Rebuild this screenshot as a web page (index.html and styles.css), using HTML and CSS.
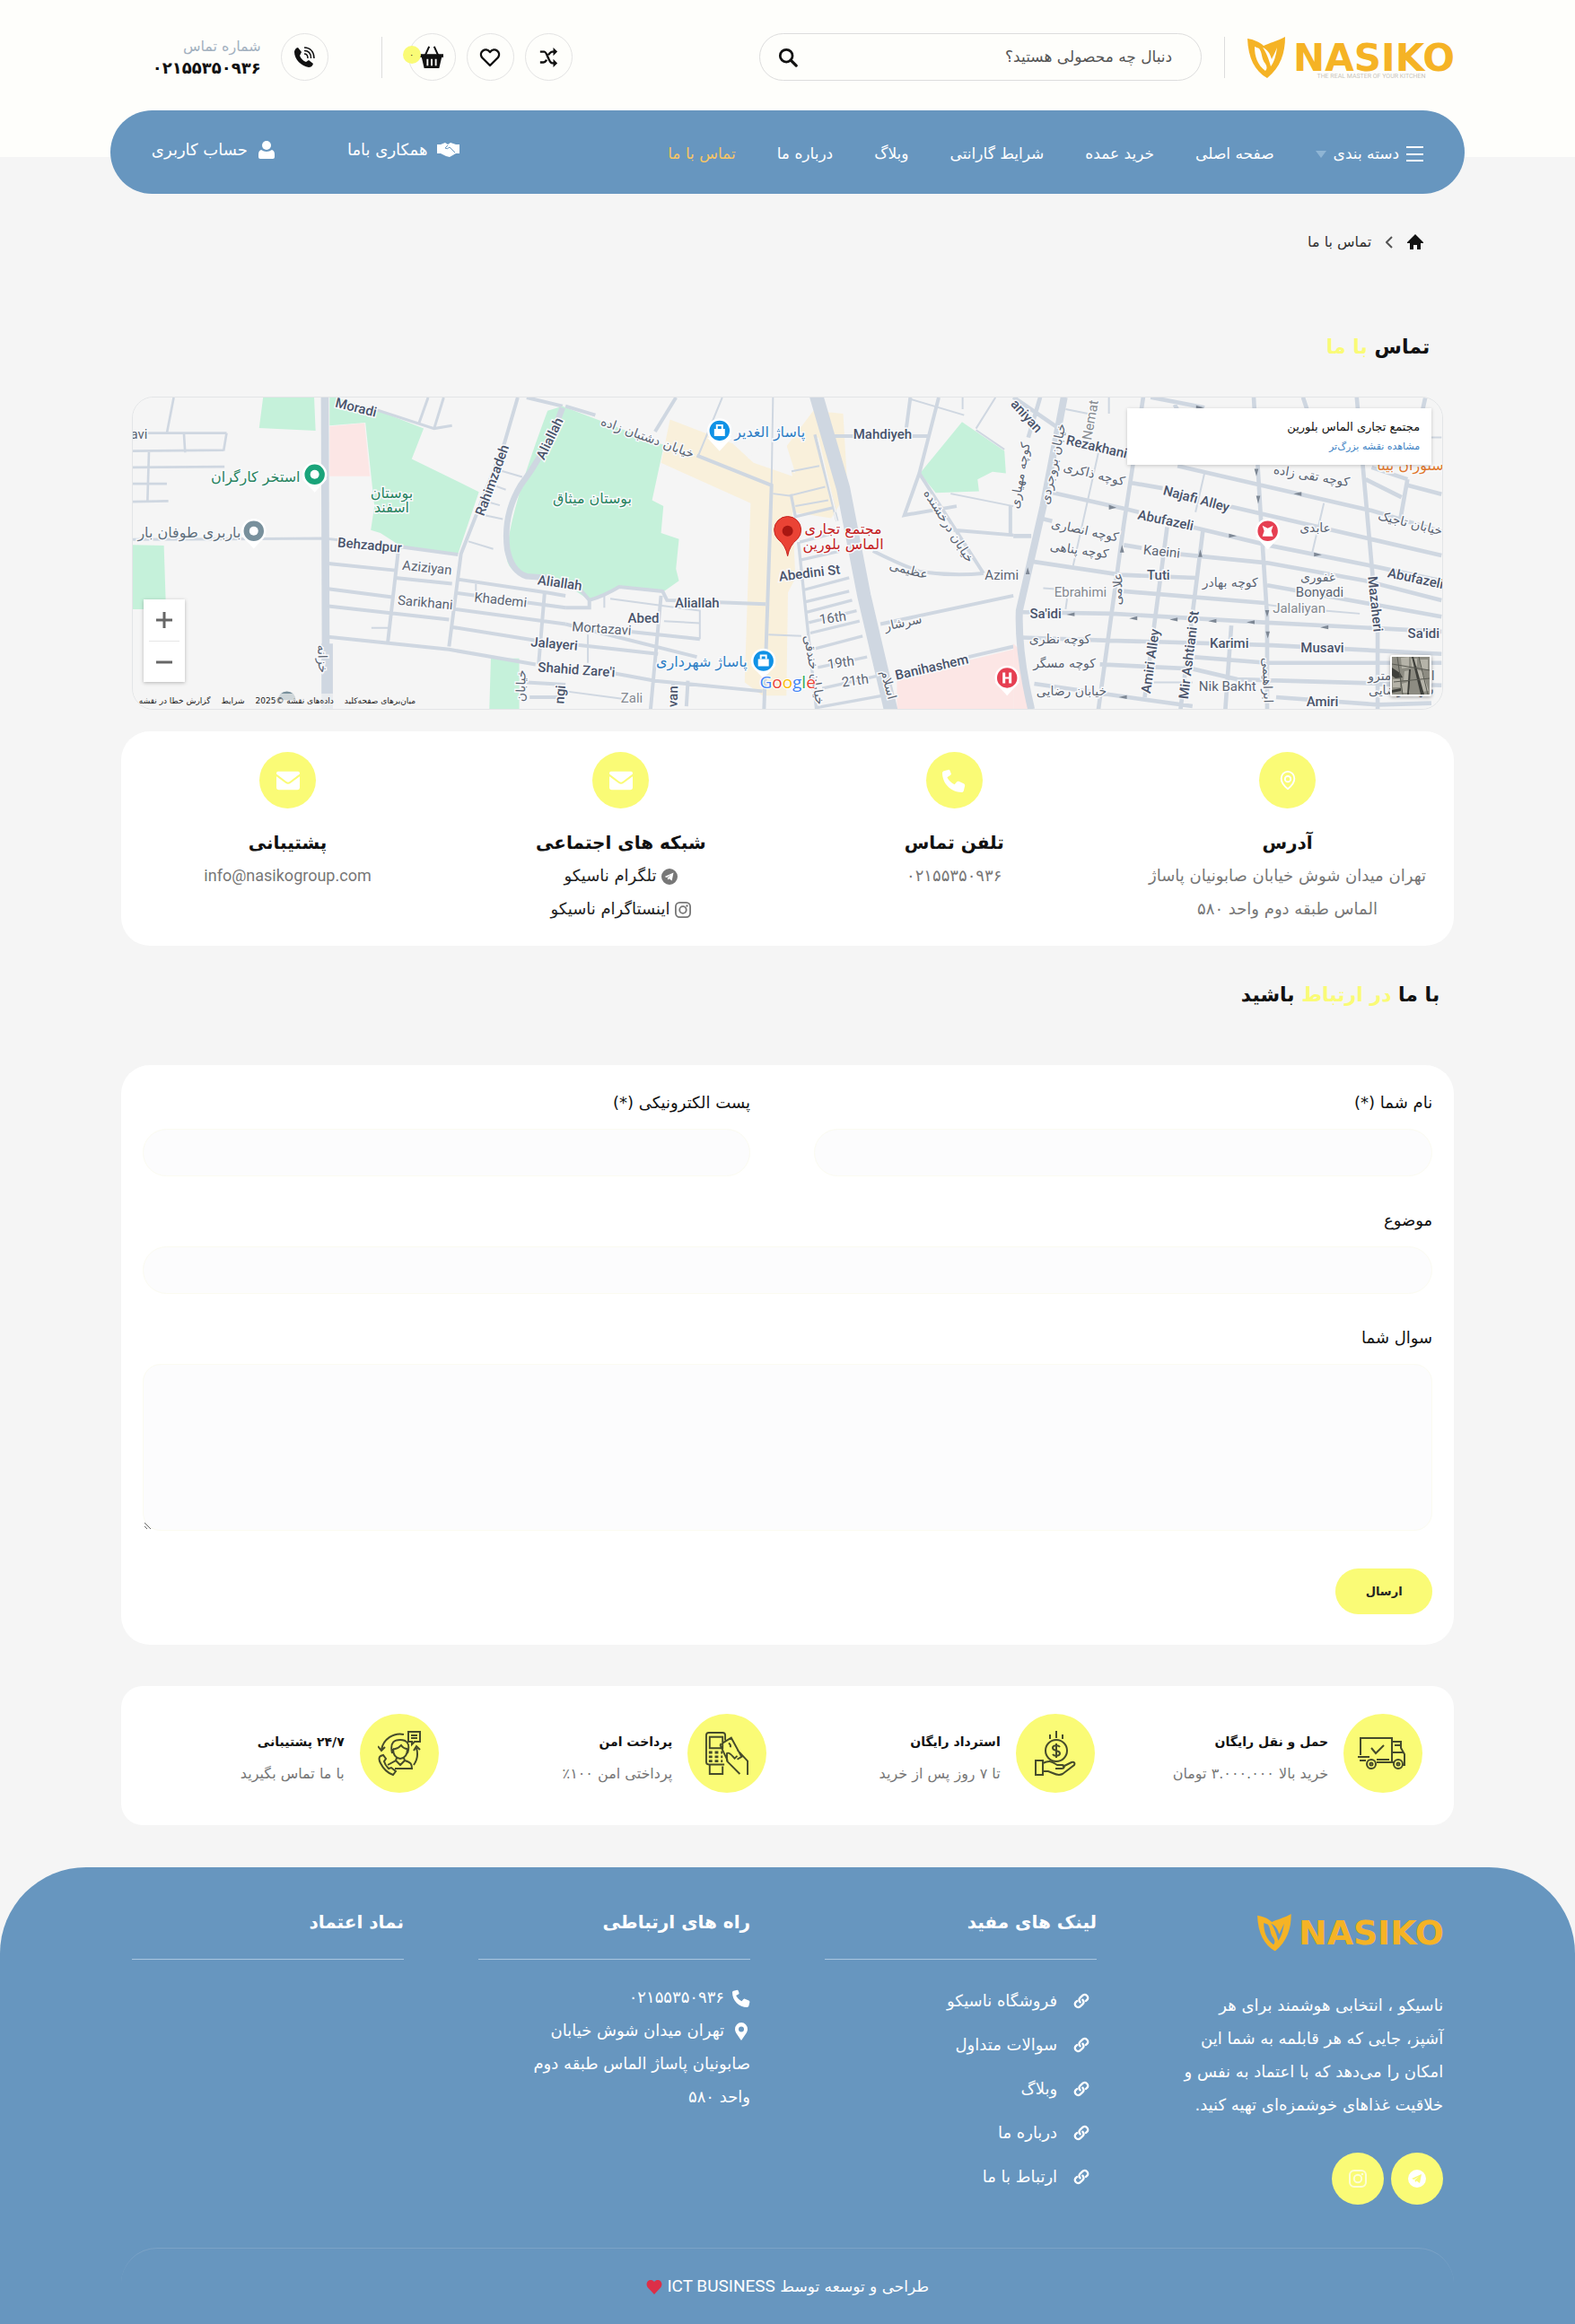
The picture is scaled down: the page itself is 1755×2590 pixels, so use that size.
FILE: index.html
```html
<!DOCTYPE html>
<html lang="fa" dir="rtl">
<head>
<meta charset="utf-8">
<meta name="viewport" content="width=device-width, initial-scale=1">
<title>تماس با ما</title>
<link rel="stylesheet" href="styles.css">
</head>
<body>
<svg class="sprite" aria-hidden="true">
  <symbol id="leaf" viewBox="0 0 42 46"><path fill-rule="evenodd" d="M0 2C7 3 14 6 18 10C24 7 33 5 42 0C42 18 37 34 22 46C8 38 1 24 0 2ZM8 11C8 22 11 31 20 38C22 36 22 33 20 30C15 24 17 18 13 13ZM17 12C21 17 24 26 26 33C30 28 32 20 33 12C30 19 29 21 27 25C25 18 22 14 17 12Z"/></symbol>
  <symbol id="search" viewBox="0 0 24 24"><circle cx="10" cy="10" r="7.5" fill="none" stroke="currentColor" stroke-width="3"/><path d="M15.500 15.500L22 22" stroke="currentColor" stroke-width="3.500" stroke-linecap="round"/></symbol>
  <symbol id="shuffle" viewBox="0 0 24 24"><path fill="none" stroke="currentColor" stroke-width="2.600" d="M2 5H7C11 5 12 19 17 19H20M2 18H6C8 18 9 16.500 10 15M12 9C13.500 7 15 5 17 5H20"/><path d="M18 0L23 5L18 10ZM18 14L23 19L18 24Z"/></symbol>
  <symbol id="heart-line" viewBox="0 0 24 24"><path fill="none" stroke="currentColor" stroke-width="2.400" stroke-linejoin="round" d="M12 21L3 12C-1 6 7 0 12 6C17 0 25 6 21 12Z"/></symbol>
  <symbol id="basket" viewBox="0 0 28 28"><path fill="none" stroke="currentColor" stroke-width="2.200" d="M6 12L11 1M22 12L17 1"/><path fill-rule="evenodd" d="M0 10H28V14H26L23 27H5L2 14H0ZM8 16V24H10V16ZM13 16V24H15V16ZM18 16V24H20V16Z"/></symbol>
  <symbol id="phone" viewBox="0 0 24 24"><path d="M6.600 0.800L1.700 2C0.600 2.300 0 3.200 0 4.200C0 15 9 24 19.800 24C20.800 24 21.700 23.400 22 22.300L23.200 17.400C23.400 16.300 22.900 15.400 22 15L17 12.800C16.100 12.500 15.200 12.700 14.600 13.500L12.600 16C9 14.300 6.500 11.500 5 8.500L8.200 6.500C9 6 9.300 5.300 8.900 4.400L7.900 1.900C7.600 1.100 7.200 0.700 6.600 0.800Z"/></symbol>
  <symbol id="phone-wave" viewBox="0 0 24 24"><path d="M5 1L9 6L7 10C8 13 11 16 14 17L17 15L22 19C21 22 19 23 17 23C9 22 1 14 1 6C1 4 3 1 5 1Z"/><path fill="none" stroke="currentColor" stroke-width="1.500" d="M12 1C19 1 23 6 23 13M12 4.500C17 4.500 19.500 8 19.500 13M12 8C15 8 16 10 16 13"/></symbol>
  <symbol id="home" viewBox="0 0 18 18"><path d="M9 0L18 9V10H15V17H11V12H7V17H3V10H0V9Z"/></symbol>
  <symbol id="user" viewBox="0 0 18 20"><circle cx="9" cy="5" r="5"/><path d="M3 10Q9 14 15 10Q18 11 18 15V18Q18 20 16 20H2Q0 20 0 18V15Q0 11 3 10Z"/></symbol>
  <symbol id="hands" viewBox="0 0 25 16"><path d="M0 2H4L9 0L12 2L15 0L21 2H25V12H21L14 16L10 15L4 12H0Z"/><path d="M12 3L9 6Q11 8 14 5L20 11" fill="none" stroke="#6796bf" stroke-width="1"/></symbol>
  <symbol id="mail" viewBox="0 0 28 22"><path d="M2 0H26Q28 0 28 2V3L16 12Q14 13.500 12 12L0 3V2Q0 0 2 0ZM0 6L11 14Q14 16 17 14L28 6V19Q28 22 25 22H3Q0 22 0 19Z"/></symbol>
  <symbol id="pin-line" viewBox="0 0 20 24"><path fill="none" stroke="currentColor" stroke-width="2" d="M10 22C5 18 2 14 2 9.500A8 8.500 0 0 1 18 9.500C18 14 15 18 10 22Z"/><circle cx="10" cy="10" r="3.500" fill="none" stroke="currentColor" stroke-width="2"/></symbol>
  <symbol id="pin" viewBox="0 0 20 20"><path fill-rule="evenodd" d="M10 20C6 14 3 11 3 7.500A7 7.500 0 0 1 17 7.500C17 11 14 14 10 20ZM10 4.500A3 3 0 1 0 10 10.500A3 3 0 1 0 10 4.500Z"/></symbol>
  <symbol id="telegram" viewBox="0 0 20 20"><path fill-rule="evenodd" d="M10 0A10 10 0 1 0 10 20A10 10 0 1 0 10 0ZM15 5L13 15L9.500 12.500L8 14L7.500 11.500L12 7.500L6.500 11L4 10Z"/></symbol>
  <symbol id="instagram" viewBox="0 0 20 20"><g fill="none" stroke="currentColor" stroke-width="2"><rect x="1" y="1" width="18" height="18" rx="5"/><circle cx="10" cy="10" r="4.200"/></g><circle cx="15" cy="5" r="1.300"/></symbol>
  <symbol id="chain" viewBox="0 0 20 20"><g fill="none" stroke="currentColor" stroke-width="2.600" stroke-linecap="round"><path d="M8.500 11.500A4 4 0 0 1 8.500 6L12 2.700A4 4 0 0 1 17.500 8L15.500 10"/><path d="M11.500 8.500A4 4 0 0 1 11.500 14L8 17.300A4 4 0 0 1 2.500 12L4.500 10"/></g></symbol>
  <symbol id="heart" viewBox="0 0 18 18"><path d="M9 17L1.500 9C-2 3 5-2 9 3C13-2 20 3 16.500 9Z"/></symbol>
  <symbol id="truck" viewBox="0 0 56 36"><g fill="none" stroke="currentColor" stroke-width="2"><path d="M3 20V1H38V27M3 26H9M21 28H41M38 5H48V12L52 19V31H50M38 17H51M41 9H48M0 22H13M2 26H9M21 25H35"/><path d="M15 12L20 18L29 9"/><circle cx="15" cy="30" r="5"/><circle cx="45" cy="30" r="5"/><circle cx="15" cy="30" r="1.500"/><circle cx="45" cy="30" r="1.500"/></g></symbol>
  <symbol id="refund" viewBox="0 0 46 50"><g fill="none" stroke="currentColor" stroke-width="2"><path d="M24 0V8M17 4V9M31 4V9M1 33H9V49H1ZM9 36C18 32 20 35 25 38H31C34 39 33 42 30 42H23M31 40L41 35C44 34 45 36 44 38L31 48C27 50 24 49 20 47L15 45H9"/><circle cx="24" cy="22" r="12"/><path d="M28 18C26 15 20 16 20 19C20 23 28 21 28 25C28 28 22 29 20 26M24 14V30"/></g></symbol>
  <symbol id="payment" viewBox="0 0 50 50"><g fill="none" stroke="currentColor" stroke-width="2"><path d="M22 38H4Q1 38 1 35V4Q1 1 4 1H20Q23 1 23 4V10M5 6H20V19H5ZM5 38V49H20V40M17 15L30 7L42 29L37 32M17 15L26 34M49 50V34L37 21M25 34L40 49M25 34V25C28 23 31 28 34 31L37 28M27 13Q30 15 29 18"/><path stroke-width="3" stroke-dasharray="4 3" d="M4 24H20M4 29H20M4 34H20"/></g></symbol>
  <symbol id="support" viewBox="0 0 48 50"><g fill="none" stroke="currentColor" stroke-width="2"><path d="M34 1H47V12H41L38 15V12H34ZM37 5H44M37 8H44M29 4A21 21 0 0 0 4 21M0 17L4 22L8 18M43 19A22 22 0 0 1 40 38M40 22L43 17L47 21M16 25C13 12 19 10 25 10S37 13 33 25M17 20C22 21 25 17 26 16C28 19 30 20 33 20M17 20Q17 30 25 31Q33 30 33 20M21 30L20 33L11 38M29 30L30 33C37 35 38 37 38 42H19M20 33L25 38L30 33M3 28Q0 30 3 36Q8 46 17 49L20 45L15 41L12 42Q8 38 7 34L9 31L6 27Z"/></g></symbol>
</svg>

<header class="site-header">
  <div class="wrap">
    <div class="topbar">
      <a class="logo" href="#" aria-label="NASIKO">
        <svg viewBox="0 0 230 46"><use href="#leaf" x="0" y="0" width="42" height="46"/><text class="logo-name" x="231" y="38" text-anchor="end">NASIKO</text><text class="logo-tag" x="138" y="46" text-anchor="middle">THE REAL MASTER OF YOUR KITCHEN</text></svg>
      </a>
      <span class="divider"></span>
      <form class="search">
        <input type="search" aria-label="جستجو" placeholder="دنبال چه محصولی هستید؟">
        <button type="button" aria-label="جستجو"><svg class="i22"><use href="#search"/></svg></button>
      </form>
      <div class="tools">
        <a class="round" href="#" aria-label="مقایسه"><svg class="i22"><use href="#shuffle"/></svg></a>
        <a class="round" href="#" aria-label="علاقه‌مندی"><svg class="i24"><use href="#heart-line"/></svg></a>
        <a class="round" href="#" aria-label="سبد خرید"><svg class="i26"><use href="#basket"/></svg><span class="count">۰</span></a>
      </div>
      <span class="divider"></span>
      <div class="call">
        <a class="round" href="#" aria-label="تماس"><svg class="i24"><use href="#phone-wave"/></svg></a>
        <div class="call-text"><span>شماره تماس</span><strong>۰۲۱۵۵۳۵۰۹۳۶</strong></div>
      </div>
    </div>
    <nav class="navbar">
      <ul class="menu">
        <li><a class="cats" href="#"><span class="burger"></span>دسته بندی<span class="caret"></span></a></li>
        <li><a href="#">صفحه اصلی</a></li>
        <li><a href="#">خرید عمده</a></li>
        <li><a href="#">شرایط گارانتی</a></li>
        <li><a href="#">وبلاگ</a></li>
        <li><a href="#">درباره ما</a></li>
        <li><a class="active" href="#">تماس با ما</a></li>
      </ul>
      <div class="account">
        <a href="#"><svg class="hands"><use href="#hands"/></svg>همکاری باما</a>
        <a href="#"><svg class="i20"><use href="#user"/></svg>حساب کاربری</a>
      </div>
    </nav>
  </div>
</header>

<main class="wrap">
  <nav class="crumbs" aria-label="مسیر">
    <a href="#" aria-label="خانه"><svg class="i18"><use href="#home"/></svg></a>
    <svg class="chev" viewBox="0 0 8 14"><path d="M7 1L1 7L7 13" fill="none" stroke="#555" stroke-width="2"/></svg>
    <span>تماس با ما</span>
  </nav>

  <h1 class="title">تماس <em>با ما</em></h1>

  <section class="map">
    <svg class="map-art" viewBox="0 0 1462 348" direction="ltr">
      <rect width="1462" height="348" fill="#f5f5f5"/>
      <g transform="translate(-17 -12) scale(.333333)" fill="none" stroke="#cfd7e1" stroke-width="12">
        <g stroke="none" fill="#c5f1da"><path d="M488 30H658L663 147L474 138ZM710 30L860 75L1025 140L985 242L1210 352L1140 560L950 535L880 490L848 480L860 400L830 120L710 130ZM50 530L155 532L162 745H50ZM1250 910H1345V1080H1245Z"/><path fill="#fce6e5" d="M710 132L827 122L845 300H710Z"/></g>
        <path d="M188 36L165 155M50 155H365M222 155L226 220M365 155L355 215M50 215L355 212M105 215L100 385M50 270L358 268M50 325H165M50 385L170 383" stroke-width="8"/>
        <path d="M50 512L690 508L760 515M860 75L1060 140L1120 130M1010 120L1040 36M1060 140L1092 36" stroke-width="9"/>
        <path stroke-width="26" d="M694 36L697 850V1080"/><path stroke-width="38" d="M702 860V1080"/>
        <path d="M1340 36L1295 190L1150 560L1110 870M940 535L1140 562M940 550L905 855M705 592L930 615M930 640L1120 660M705 677L920 705M705 735L1110 780M705 838L1110 880L1400 930M1140 645L1440 690L1500 700M1130 690L1500 740M1130 745L1500 795M1120 805L1400 850M1430 690L1410 930M1370 36L1490 65M1370 990L1500 998M1380 1040H1500"/>
        <path stroke-width="6" d="M1280 280L1355 302M1260 330L1300 345M1220 380L1280 397M1205 425L1290 443M1175 518L1258 543M850 808H905M1200 660V690"/>
      </g>
      <g transform="translate(483 -12) scale(.333333)" fill="none" stroke="#cfd7e1" stroke-width="12">
        <g stroke="none"><path fill="#f9f0db" d="M350 110L560 190L630 255L760 300L740 200L830 80L930 90L945 350L890 440L760 420L770 640L745 690L740 1035H660L600 990L620 390L320 255Z"/><path fill="#f5f5f5" d="M650 205L690 180L740 195L770 290L700 260L610 240Z"/><path fill="#c5f1da" d="M-10 65L330 195L290 380L328 400L320 490L380 510L370 610L380 650L330 685L180 670L80 715L-30 640L-140 635Q-210 610-195 540Q-180 400-60 80ZM1328 118L1470 215L1475 290L1430 285L1380 310L1385 350L1240 355L1187 290Z"/><path fill="#fce6e5" d="M1110 975L1500 880V1080H1110Z"/></g>
        <path stroke-width="20" d="M-10 70Q-60 210-150 330Q-210 430-195 545Q-180 620-130 635L-60 640"/>
        <path d="M0 65L100 95M370 36L300 150M440 230L690 330L665 1080M1155 36L1140 150M1250 36L1185 290L1135 430L1310 400M895 165H1215M1185 290L1400 625M1030 550Q1130 600 1190 620Q1300 635 1400 625M1300 480L1500 497M1490 400V500M1055 795L1500 700M1350 905L1500 870M50 680L80 715Q130 700 180 670L325 685L340 715L670 728M80 715V740L0 740M320 700L285 1080M0 795L440 905M210 820L450 845M40 865L310 895M165 960L300 985L660 1020M360 985V1010M410 985L405 1070"/>
        <path stroke-width="6" d="M525 36L445 230M695 36L690 330M75 830V925M130 700V740M150 710L450 750V845M330 785L450 792M680 830L790 835M757 283L850 265M695 358L750 365L870 335M770 400L880 380M0 1020L190 1045M1150 40L1335 95M1440 36L1375 140M1330 36V75M1470 210L1375 145M1290 358L1500 400"/>
        <path d="M835 160L910 450M755 360L770 435L895 405M780 520L840 1080M785 520L900 490M790 580L920 550M800 680L950 640M805 720L950 685M810 755L960 715M815 790L975 750M820 825L985 785M825 880L995 835M860 1010L1040 970M845 940L1010 905M840 1075L1060 1035" stroke-width="10"/>
        <path stroke-width="46" d="M840 30L930 340L1000 700L1090 1085"/>
        <path stroke="#f5f5f5" stroke-width="4" d="M900 420L925 510M845 170L905 420"/>
      </g>
      <g transform="translate(983 -92) scale(.333333)" fill="none" stroke="#cfd7e1" stroke-width="14">
        <path fill="#fce6e5" stroke="none" d="M0 1100L20 1120L65 1320H0Z"/>
        <path stroke-width="24" d="M170 275L100 640L20 990Q15 1130 60 1320"/>
        <path d="M90 275L50 410M0 275L175 395M435 275L370 700L285 1320M460 275L640 310M640 480L540 300M805 275L830 700L850 1010V1320M970 275L985 320M1150 275L1220 1060V1320M1380 275L1370 320M385 560L500 580M550 505L1200 655L1434 725M720 640L1434 805M110 590L380 650L420 660M600 710L850 770L1200 840L1434 890M90 680L130 690M60 740H0M60 825L360 870L610 880M370 770L430 780M550 800L850 830L1180 890L1434 955M370 925L850 965M850 905L1434 1010M30 995L330 1000L850 1030L1434 1060M30 1080L320 1090L850 1105L1434 1135M290 1170L600 1185L750 1220L1434 1240M600 1145L850 1165H1434M70 1235L420 1285L600 1310M880 1280L1220 1305L1400 1300M515 710L440 1280M635 720L560 1320M730 1040L710 1320M1320 550L1295 690M1180 550L1300 610M1320 570L1434 600M1200 510L1320 550"/>
        <path stroke-width="6" d="M320 275V330M175 315L250 330M285 460L200 840M640 530L610 660M1040 630L1000 800M100 915L145 918M180 950L175 985M850 970L885 975M1040 990L1160 1000M470 1230H600M1390 410H1434"/>
        <path fill="#7d8794" stroke="none" d="M320 635L345 645L320 652ZM612 302L638 310L612 316ZM722 732L748 740L722 746ZM1007 795L1033 803L1007 809ZM965 592L938 598L965 606ZM205 996L178 1003L205 1009ZM415 1009L388 1016L415 1022ZM550 1013L523 1020L550 1026ZM680 1018L653 1025L680 1031ZM808 1022L781 1029L808 1035ZM1055 1039L1028 1046L1055 1052ZM380 1273L353 1280L380 1286ZM813 605L820 632L827 605ZM807 515L814 540L821 515ZM843 988L850 1012L857 988ZM845 1060L852 1083L859 1060ZM357 795L364 770L371 795ZM619 810L626 785L633 810ZM41 868L48 845L55 868Z"/>
      </g>
      <g class="road" text-anchor="middle">
        <g class="b">
          <text transform="translate(248 16) rotate(14)">Moradi</text><text transform="translate(264 170) rotate(5)">Behzadpur</text><text transform="translate(406 94) rotate(-70)">Rahimzadeh</text><text transform="translate(470 48) rotate(-64)">Aliallah</text><text transform="translate(470 280) rotate(5)">Jalayeri</text><text transform="translate(495 309) rotate(4)">Shahid Zare'i</text><text transform="translate(476 212) rotate(8)">Aliallah</text><text x="570" y="251">Abed</text><text x="630" y="234">Aliallah</text><text transform="translate(756 201) rotate(-7)">Abedini St</text><text x="837" y="46">Mahdiyeh</text><text transform="translate(893 306) rotate(-13)">Banihashem</text><text transform="translate(994 24) rotate(48)">aniyan</text><text transform="translate(1075 60) rotate(13)">Rezakhani</text><text transform="translate(1186 118) rotate(15)">Najafi Alley</text><text transform="translate(1152 142) rotate(12)">Abufazeli</text><text x="1145" y="203">Tuti</text><text x="1019" y="246">Sa'idi</text><text transform="translate(1141 295) rotate(-82)">Amiri Alley</text><text transform="translate(1184 288) rotate(-83)">Mir Ashtiani St</text><text x="1224" y="280">Karimi</text><text x="1328" y="285">Musavi</text><text x="1328" y="345">Amiri</text><text transform="translate(1382 231) rotate(84)">Mazaheri</text><text transform="translate(1431 207) rotate(12)">Abufazeli</text><text x="1441" y="269">Sa'idi</text><text transform="translate(482 332) rotate(-85)">ngi</text><text transform="translate(608 334) rotate(-88)">van</text>
        </g>
        <text x="7" y="46">avi</text><text transform="translate(328 195) rotate(6)">Aziziyan</text><text transform="translate(326 234) rotate(5)">Sarikhani</text><text transform="translate(410 231) rotate(6)">Khademi</text><text transform="translate(523 263) rotate(4)">Mortazavi</text><text x="970" y="203">Azimi</text><text transform="translate(782 251) rotate(-8)">16th</text><text transform="translate(791 301) rotate(-8)">19th</text><text transform="translate(807 321) rotate(-8)">21th</text><text transform="translate(1148 177) rotate(6)">Kaeini</text><text x="1325" y="222">Bonyadi</text><text x="1222" y="328">Nik Bakht</text>
        <g class="dim"><text x="557" y="341">Zali</text><text transform="translate(1074 26) rotate(-80)">Nemat</text><text x="1058" y="222">Ebrahimi</text><text x="1302" y="240">Jalaliyan</text></g>
        <g class="fa">
          <text transform="translate(207 292) rotate(88)">خزانه</text><text transform="translate(438 322) rotate(-88)">خیابان</text><text transform="translate(573 49) rotate(20)">خیابان دشتبان زاده</text><text transform="translate(907 146) rotate(58)">خیابان درخشنده</text><text transform="translate(865 197) rotate(15)">عظیمی</text><text transform="translate(756 305) rotate(80)">خیابان خندقی</text><text transform="translate(861 256) rotate(-12)">سرشار</text><text transform="translate(839 322) rotate(75)">اسلام</text><text transform="translate(1032 75) rotate(-78)">خیابان بروجردی</text><text transform="translate(995 88) rotate(-80)">کوچه مهیاری</text><text transform="translate(1072 90) rotate(14)">کوچه ذاکری</text><text transform="translate(1062 153) rotate(12)">کوچه انصاری</text><text transform="translate(1056 175) rotate(8)">کوچه پناهی</text><text transform="translate(1104 214) rotate(-88)">علامی</text><text x="1035" y="275">کوچه نظری</text><text x="1040" y="302">کوچه مسگر</text><text x="1048" y="333">خیابان رضایی</text><text x="1225" y="211">کوچه بهادر</text><text transform="translate(1262 316) rotate(88)">ابراهیمی</text><text x="1320" y="150">عابدی</text><text x="1323" y="205">غفوری</text><text transform="translate(1425 145) rotate(14)">خیابان تاجیک</text><text transform="translate(1315 92) rotate(10)">کوچه تقی زاده</text><text x="1416" y="316">ایستگاه مترو</text><text x="1416" y="332">شهید رضایی</text>
        </g>
        <g class="poi">
          <text x="137" y="94" fill="#27835f">استخر کارگران</text><text x="63" y="156" fill="#5f6f7c">باربری طوفان بار</text><text x="289" y="112" fill="#27835f">بوستان</text><text x="289" y="128" fill="#27835f">اسفند</text><text x="513" y="118" fill="#27835f">بوستان میثاق</text><text x="711" y="44" fill="#2d7ec4">پاساژ الغدیر</text><text x="635" y="301" fill="#2d7ec4">پاساژ شهرداری</text><text x="793" y="152" fill="#c5221f">مجتمع تجاری</text><text x="793" y="169" fill="#c5221f">الماس بلورین</text><text x="1430" y="81" fill="#e0762b">رستوران بینا</text>
        </g>
      </g>
      <g stroke="#fff" stroke-width="2.500">
        <path fill="#fff" d="M192 92L203 104L214 92ZM124 155L135 167L146 155ZM644 46L655 58L666 46ZM693 300L704 312L715 300ZM965 319L976 331L987 319ZM1256 156L1267 168L1278 156Z"/>
        <circle cx="203" cy="86" r="12.500" fill="#1aa47a"/><circle cx="135" cy="149" r="12.500" fill="#78909c"/><circle cx="655" cy="37" r="12.500" fill="#1092e6"/><circle cx="704" cy="294" r="12.500" fill="#1092e6"/><circle cx="976" cy="313" r="12.500" fill="#e63f52"/><circle cx="1267" cy="149" r="12.500" fill="#e63f52"/>
      </g>
      <g fill="#fff"><circle cx="203" cy="86" r="5"/><circle cx="135" cy="149" r="5"/><path d="M649 35H661V43H649ZM698 292H710V300H698ZM971 307H974V312H978V307H981V319H978V314H974V319H971ZM1261 143L1267 146L1273 143L1271 149L1273 155H1261L1263 149Z"/><path d="M652 35V31H658V35M701 292V288H707V292" fill="none" stroke="#fff" stroke-width="2"/></g>
      <path fill="#78909c" d="M162 338A10 10 0 0 1 182 338Z"/>
      <path d="M731 177Q729 165 720 158A15 15 0 1 1 742 158Q733 165 731 177Z" fill="#ea4335" stroke="#c5221f"/><circle cx="731" cy="149" r="6" fill="#a81712"/>
      <text class="google" x="731" y="325" text-anchor="middle"><tspan fill="#4285f4">G</tspan><tspan fill="#ea4335">o</tspan><tspan fill="#fbbc05">o</tspan><tspan fill="#4285f4">g</tspan><tspan fill="#34a853">l</tspan><tspan fill="#ea4335">e</tspan></text>
    </svg>
    <div class="place"><strong>مجتمع تجاری الماس بلورین</strong><a href="#">مشاهده نقشه بزرگ‌تر</a></div>
    <button class="satellite" type="button" aria-label="ماهواره"><svg viewBox="0 0 42 42"><rect width="42" height="42" fill="#8d8c82"/><path fill="#b5b3a8" d="M10 1L19 0V12L11 13ZM21 2H28V10L22 12ZM31 3H40V14H32ZM14 16L20 15V26H13ZM27 14L34 16L41 38L33 39ZM1 25H9V34H1ZM11 30L18 28L20 40H12Z"/><path fill="#3f403b" d="M22 0H24L36 42H32ZM0 12L9 18L12 23L4 24L0 21ZM19 14H21L19 42H17ZM0 37L10 35V38L0 40Z"/><path stroke="#595a52" d="M0 8L42 15M2 28L42 24M6 0L12 42M30 0L40 42" fill="none"/></svg></button>
    <div class="zoomer"><button type="button" aria-label="بزرگ‌نمایی"><svg viewBox="0 0 18 18"><path d="M9 0V18M0 9H18" stroke="#666" stroke-width="3"/></svg></button><button type="button" aria-label="کوچک‌نمایی"><svg viewBox="0 0 18 18"><path d="M0 9H18" stroke="#666" stroke-width="3"/></svg></button></div>
    <div class="credits"><span>میان‌برهای صفحه‌کلید</span><span>داده‌های نقشه ©2025</span><span>شرایط</span><span>گزارش خطا در نقشه</span></div>
  </section>

  <section class="card contacts">
    <article><span class="disc"><svg class="i22"><use href="#pin-line"/></svg></span><h2>آدرس</h2><p>تهران میدان شوش خیابان صابونیان پاساژ<br>الماس طبقه دوم واحد ۵۸۰</p></article>
    <article><span class="disc"><svg class="i26"><use href="#phone"/></svg></span><h2>تلفن تماس</h2><p>۰۲۱۵۵۳۵۰۹۳۶</p></article>
    <article><span class="disc"><svg class="i26"><use href="#mail"/></svg></span><h2>شبکه های اجتماعی</h2><p><svg class="i18"><use href="#telegram"/></svg> <a href="#">تلگرام ناسیکو</a><br><svg class="i18"><use href="#instagram"/></svg> <a href="#">اینستاگرام ناسیکو</a></p></article>
    <article><span class="disc"><svg class="i26"><use href="#mail"/></svg></span><h2>پشتیبانی</h2><p class="latin">info@nasikogroup.com</p></article>
  </section>

  <h2 class="title second">با ما <em>در ارتباط</em> باشید</h2>

  <form class="card form">
    <div class="pair">
      <div class="field"><label for="name">نام شما (*)</label><input id="name" type="text"></div>
      <div class="field"><label for="email">پست الکترونیکی (*)</label><input id="email" type="email"></div>
    </div>
    <div class="field"><label for="subject">موضوع</label><input id="subject" type="text"></div>
    <div class="field"><label for="question">سوال شما</label><textarea id="question"></textarea></div>
    <button class="send" type="button">ارسال</button>
  </form>

  <section class="card perks">
    <article><span class="disc big"><svg class="i56"><use href="#truck"/></svg></span><div><h3>حمل و نقل رایگان</h3><p>خرید بالا ۳.۰۰۰.۰۰۰ تومان</p></div></article>
    <article><span class="disc big"><svg class="i48"><use href="#refund"/></svg></span><div><h3>استرداد رایگان</h3><p>تا ۷ روز پس از خرید</p></div></article>
    <article><span class="disc big"><svg class="i48"><use href="#payment"/></svg></span><div><h3>پرداخت امن</h3><p>پرداختی امن ۱۰۰٪</p></div></article>
    <article><span class="disc big"><svg class="i48"><use href="#support"/></svg></span><div><h3>۲۴/۷ پشتیبانی</h3><p>با ما تماس بگیرید</p></div></article>
  </section>
</main>

<footer class="site-footer">
  <div class="wrap">
    <div class="columns">
      <section class="about">
        <a class="logo" href="#" aria-label="NASIKO"><svg viewBox="0 0 230 46"><use href="#leaf" x="0" y="0" width="42" height="46"/><text class="logo-name" x="231" y="38" text-anchor="end">NASIKO</text></svg></a>
        <p>ناسیکو ، انتخابی هوشمند برای هر<br>آشپز، جایی که هر قابلمه به شما این<br>امکان را می‌دهد که با اعتماد به نفس و<br>خلاقیت غذاهای خوشمزه‌ای تهیه کنید.</p>
        <div class="social"><a href="#" aria-label="تلگرام"><svg class="i20"><use href="#telegram"/></svg></a><a href="#" aria-label="اینستاگرام"><svg class="i20 faint"><use href="#instagram"/></svg></a></div>
      </section>
      <section>
        <h2>لینک های مفید</h2>
        <ul class="links">
          <li><a href="#"><svg class="i18"><use href="#chain"/></svg>فروشگاه ناسیکو</a></li>
          <li><a href="#"><svg class="i18"><use href="#chain"/></svg>سوالات متداول</a></li>
          <li><a href="#"><svg class="i18"><use href="#chain"/></svg>وبلاگ</a></li>
          <li><a href="#"><svg class="i18"><use href="#chain"/></svg>درباره ما</a></li>
          <li><a href="#"><svg class="i18"><use href="#chain"/></svg>ارتباط با ما</a></li>
        </ul>
      </section>
      <section>
        <h2>راه های ارتباطی</h2>
        <p class="reach"><svg class="i20"><use href="#phone"/></svg>۰۲۱۵۵۳۵۰۹۳۶<br><svg class="i20"><use href="#pin"/></svg>تهران میدان شوش خیابان<br>صابونیان پاساژ الماس طبقه دوم<br>واحد ۵۸۰</p>
      </section>
      <section><h2>نماد اعتماد</h2></section>
    </div>
    <p class="made">طراحی و توسعه توسط <span class="latin">ICT BUSINESS</span> <svg class="i18"><use href="#heart"/></svg></p>
  </div>
</footer>
</body>
</html>
```
FILE: styles.css
```css
* { box-sizing: border-box; }
body {
  margin: 0;
  background: #f5f5f5;
  color: #111;
  font-family: "DejaVu Sans", sans-serif;
  font-size: 18px;
  line-height: 37px;
}
a { color: inherit; text-decoration: none; }
h1, h2, h3, p, ul { margin: 0; padding: 0; }
ul { list-style: none; }
button, input, textarea { font: inherit; }
button { cursor: pointer; }
svg { fill: currentColor; }
.sprite { position: absolute; width: 0; height: 0; }
.wrap { width: 86%; margin: 0 auto; }
.i18 { width: 18px; height: 18px; }
.i20 { width: 20px; height: 20px; }
.i22 { width: 22px; height: 22px; }
.i24 { width: 24px; height: 24px; }
.i26 { width: 26px; height: 26px; }
.i48 { width: 48px; height: 50px; }
.i56 { width: 56px; height: 38px; }
.latin { font-family: Roboto, sans-serif; }

/* Header */
.site-header {
  padding-top: 37px;
  background: linear-gradient(#fefefb 175px, transparent 0);
}
.topbar { display: flex; align-items: center; padding: 0 12px 0 47px; height: 53px; }
.logo { display: block; width: 230px; color: #f5b325; line-height: 0; }
.logo svg { width: 100%; direction: ltr; overflow: visible; }
.logo-name { font: bold 42px "DejaVu Sans", sans-serif; }
.logo-tag { font: 7px Roboto, sans-serif; fill: #c9c5bb; }
.divider { width: 1px; height: 46px; margin: 0 25px; background: #ddd; }
.search {
  display: flex;
  align-items: center;
  width: 493px;
  height: 53px;
  padding: 0 32px 0 20px;
  border: 1px solid #ddd;
  border-radius: 27px;
}
.search input { flex: 1; min-width: 0; padding: 0; border: 0; outline: 0; background: none; font-size: 17px; }
.search input::placeholder { color: #555; opacity: 1; }
.search button { display: flex; padding: 0; border: 0; background: none; color: #111; }
.tools { display: flex; gap: 12px; margin-right: auto; }
.tools + .divider { margin: 0 29px; }
.round {
  position: relative;
  display: flex;
  align-items: center;
  justify-content: center;
  width: 53px;
  height: 53px;
  border: 1px solid #e3e3e3;
  border-radius: 50%;
}
.count {
  position: absolute;
  top: 13px;
  left: -7px;
  width: 20px;
  height: 20px;
  border-radius: 50%;
  background: #fafb76;
  font-size: 9px;
  line-height: 20px;
  text-align: center;
}
.call { display: flex; align-items: center; gap: 22px; margin-right: 30px; }
.call-text { display: flex; flex-direction: column; line-height: 24px; }
.call-text span { color: #a3b1bf; font-size: 16px; }
.navbar {
  display: flex;
  justify-content: space-between;
  height: 93px;
  margin-top: 33px;
  padding: 0 46px;
  border-radius: 47px;
  background: #6796bf;
  color: #fff;
}
.menu { display: flex; gap: 46px; line-height: 97px; font-size: 17px; }
.cats { display: flex; align-items: center; gap: 8px; }
.burger { width: 19px; height: 17px; border: solid #fff; border-width: 2px 0; background: linear-gradient(#fff, #fff) center / 100% 2px no-repeat; }
.caret { border: 6px solid transparent; border-top: 8px solid #8fb5d4; border-bottom: 0; }
.active { color: #f6c566; }
.account { display: flex; align-items: flex-start; gap: 80px; line-height: 88px; }
.account a { display: flex; align-items: center; gap: 11px; }
.hands { width: 25px; height: 16px; }

/* Page head */
.crumbs { display: flex; align-items: center; gap: 16px; padding: 35px 46px 0; font-size: 16px; color: #333; }
.crumbs a { display: flex; color: #111; }
.chev { width: 8px; height: 14px; }
.title { padding: 80px 39px 36px; font-size: 22px; line-height: 38px; }
.title em { color: #fafb76; font-style: normal; }
.title.second { padding: 36px 28px 59px; }

/* Map */
.map {
  position: relative;
  margin: 0 24px;
  overflow: hidden;
  border: 1px solid #e3e5e7;
  border-radius: 24px;
}
.map-art { display: block; width: 100%; }
.road { font: 15px Roboto, sans-serif; fill: #5b6472; paint-order: stroke; stroke: #f8f9fb; stroke-width: 3px; }
.b { font-weight: 500; fill: #49536a; }
.dim { fill: #85898f; }
.fa { font: 14px "DejaVu Sans", sans-serif; }
.poi { font: 16px "DejaVu Sans", sans-serif; }
.google { font: 500 19px "Open Sans", sans-serif; paint-order: stroke; stroke: #fff; stroke-width: 2px; }
.place {
  position: absolute;
  top: 12px;
  right: 12px;
  display: flex;
  flex-direction: column;
  width: 339px;
  padding: 10px 13px 9px;
  background: #fff;
  box-shadow: 0 1px 4px #0003;
  line-height: 22px;
}
.place strong { font-weight: normal; font-size: 13px; }
.place a { color: #4183c4; font-size: 11px; }
.satellite { position: absolute; right: 12px; bottom: 14px; width: 46px; height: 46px; padding: 0; border: 2px solid #fff; border-radius: 2px; line-height: 0; box-shadow: 0 1px 4px #0005; }
.zoomer { position: absolute; left: 12px; bottom: 30px; width: 46px; padding: 0 6px; background: #fff; box-shadow: 0 1px 4px #0004; }
.zoomer button { display: flex; align-items: center; justify-content: center; width: 100%; height: 46px; border: 0; background: none; }
.zoomer button + button { border-top: 1px solid #e6e6e6; }
.zoomer svg { width: 18px; height: 18px; flex: none; }
.credits { position: absolute; left: 0; bottom: 0; display: flex; gap: 12px; padding: 0 7px; background: #f5f5f5b0; font-size: 9px; line-height: 17px; color: #222; }

/* Cards */
.card { margin: 0 12px; border-radius: 32px; background: #fff; }
.disc { display: inline-flex; align-items: center; justify-content: center; width: 63px; height: 63px; border-radius: 50%; background: #fafb76; color: #fff; }
.contacts { display: grid; grid-template-columns: repeat(4, 1fr); margin-top: 24px; padding: 23px 0; text-align: center; }
.contacts .disc { display: flex; margin: 0 auto 20px; }
.contacts h2 { font-size: 20px; line-height: 36px; }
.contacts p { color: #777; white-space: nowrap; }
.contacts p a { color: #222; }
.contacts p svg { vertical-align: middle; }
.form { padding: 23px 24px 34px; }
.pair { display: grid; grid-template-columns: 690fr 678fr; gap: 71px; }
.field { display: flex; flex-direction: column; margin-bottom: 30px; }
.field label { margin-bottom: 11px; }
.field input, .field textarea { width: 100%; height: 53px; padding: 0 20px; border: 1px solid #fbfbf1; border-radius: 27px; background: #fcfcfd; }
.field textarea { height: 186px; padding: 16px 20px; border-radius: 20px; resize: vertical; }
.send { width: 108px; height: 51px; margin-top: 12px; border: 0; border-radius: 26px; background: #fafb76; color: #222; font-size: 13px; font-weight: bold; }
.perks { display: flex; margin-top: 46px; padding: 31px 35px 36px 0; border-radius: 24px; }
.perks article { display: flex; align-items: center; gap: 17px; flex: 0 0 25.2%; min-width: 0; }
.perks article div { padding-top: 10px; }
.perks .disc { flex: none; width: 88px; height: 88px; color: #454b2b; }
.perks h3 { font-size: 14px; line-height: 36px; white-space: nowrap; }
.perks p { color: #777; font-size: 16px; line-height: 36px; white-space: nowrap; }

/* Footer */
.site-footer { margin-top: 47px; padding-top: 40px; border-radius: 96px 96px 0 0; background: #6796bf; color: #fff; }
.columns { display: grid; grid-template-columns: repeat(4, minmax(0, 1fr)); gap: 83px; margin: 0 24px; min-height: 384px; }
.columns h2 { padding-bottom: 19px; border-bottom: 1px solid #a9c6df; font-size: 20px; line-height: 43px; }
.about .logo { width: 207px; margin: 12px 0 41px; }
.about p { white-space: nowrap; }
.social { display: flex; gap: 8px; margin-top: 35px; }
.social a { display: flex; align-items: center; justify-content: center; width: 58px; height: 58px; border-radius: 50%; background: #fafb76; }
.faint { opacity: .7; }
.links { padding: 27px 8px 0; }
.links li { margin-bottom: 12px; }
.links a { display: flex; align-items: center; gap: 18px; }
.reach { padding-top: 23px; white-space: nowrap; }
.reach svg { margin-left: 9px; vertical-align: middle; }
.made { margin: 0 12px; padding: 23px 0 24px; border: 1px solid #7ba2c6; border-width: 1px 0 0; border-radius: 40px 40px 0 0; font-size: 17px; text-align: center; }
.made .latin { font-size: 19px; }
.made svg { color: #dc2f48; vertical-align: middle; }
```
